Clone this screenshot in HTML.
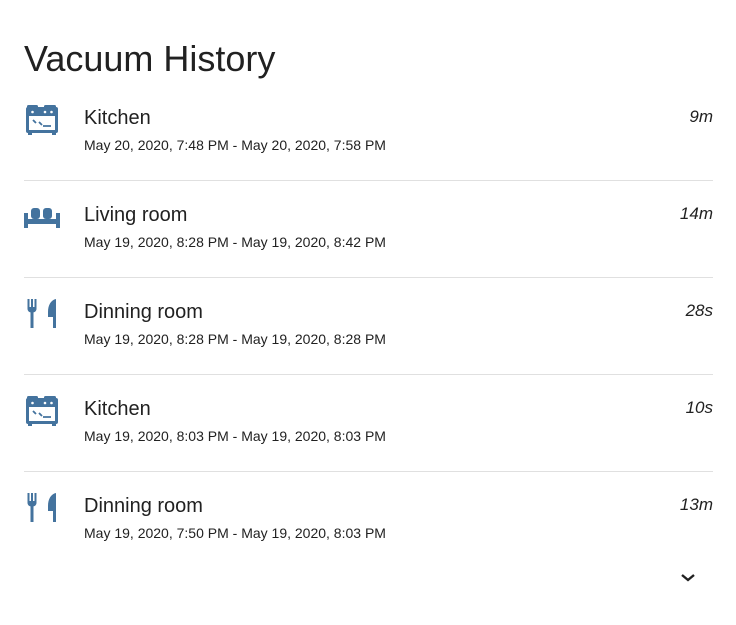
<!DOCTYPE html>
<html><head><style>
body{margin:0;background:#fff;font-family:"Liberation Sans",sans-serif;color:#212121;}
.card{position:absolute;left:0;top:0;width:736px;height:625px;background:#fff;}
h1{position:absolute;left:24px;top:36px;margin:0;font-weight:400;font-size:36px;line-height:46px;}
.row{position:absolute;left:0;width:736px;height:97px;}
.ic{position:absolute;left:24px;top:6px;width:36px;height:36px;}
.t{position:absolute;left:84px;top:8px;font-size:20px;line-height:24px;}
.d{position:absolute;left:84px;top:38px;font-size:14px;line-height:18px;}
.r{position:absolute;right:23px;top:8px;font-size:17px;font-style:italic;line-height:22px;}
.hr{position:absolute;left:24px;right:23px;top:82px;height:1px;background:#e0e0e0;}
</style></head><body><div class="card">
<h1>Vacuum History</h1>

<div class="row" style="top:98px">
<svg class="ic" viewBox="0 0 36 36"><g fill="#44739e"><rect x="2" y="3" width="32" height="26" rx="2"/><rect x="3" y="1" width="11" height="4" rx="1.5"/><rect x="20" y="1" width="12" height="4" rx="1.5"/><rect x="4" y="28" width="4" height="3"/><rect x="28" y="28" width="4" height="3"/></g><rect x="5" y="12" width="26" height="14" fill="#fff"/><g fill="#fff"><circle cx="8.5" cy="8" r="1.3"/><circle cx="21" cy="8" r="1.3"/><circle cx="27.5" cy="8" r="1.3"/></g><path d="M9 16l3 3M15 18l3 3M19 22h8" stroke="#44739e" stroke-width="1.8"/></svg>
<div class="t">Kitchen</div><div class="d">May 20, 2020, 7:48 PM - May 20, 2020, 7:58 PM</div><div class="r">9m</div><div class="hr"></div></div>

<div class="row" style="top:195px">
<svg class="ic" viewBox="0 0 36 36"><g fill="#44739e"><rect x="0" y="12" width="4" height="15"/><rect x="32" y="12" width="4" height="15"/><rect x="0" y="18" width="36" height="5"/><rect x="7" y="7" width="9" height="11" rx="3"/><rect x="19" y="7" width="9" height="11" rx="3"/></g></svg>
<div class="t">Living room</div><div class="d">May 19, 2020, 8:28 PM - May 19, 2020, 8:42 PM</div><div class="r">14m</div><div class="hr"></div></div>

<div class="row" style="top:292px">
<svg class="ic" viewBox="0 0 36 36"><g fill="#44739e"><path d="M3.5 1h2v8h1.5V1h2v8h1.5V1h2v10a3.5 3.5 0 0 1-3 3.4V30H6.5V14.4a3.5 3.5 0 0 1-3-3.4z"/><path d="M24 14c0-7 3-12 8-13v29h-3V19h-5z"/></g></svg>
<div class="t">Dinning room</div><div class="d">May 19, 2020, 8:28 PM - May 19, 2020, 8:28 PM</div><div class="r">28s</div><div class="hr"></div></div>

<div class="row" style="top:389px">
<svg class="ic" viewBox="0 0 36 36"><g fill="#44739e"><rect x="2" y="3" width="32" height="26" rx="2"/><rect x="3" y="1" width="11" height="4" rx="1.5"/><rect x="20" y="1" width="12" height="4" rx="1.5"/><rect x="4" y="28" width="4" height="3"/><rect x="28" y="28" width="4" height="3"/></g><rect x="5" y="12" width="26" height="14" fill="#fff"/><g fill="#fff"><circle cx="8.5" cy="8" r="1.3"/><circle cx="21" cy="8" r="1.3"/><circle cx="27.5" cy="8" r="1.3"/></g><path d="M9 16l3 3M15 18l3 3M19 22h8" stroke="#44739e" stroke-width="1.8"/></svg>
<div class="t">Kitchen</div><div class="d">May 19, 2020, 8:03 PM - May 19, 2020, 8:03 PM</div><div class="r">10s</div><div class="hr"></div></div>

<div class="row" style="top:486px">
<svg class="ic" viewBox="0 0 36 36"><g fill="#44739e"><path d="M3.5 1h2v8h1.5V1h2v8h1.5V1h2v10a3.5 3.5 0 0 1-3 3.4V30H6.5V14.4a3.5 3.5 0 0 1-3-3.4z"/><path d="M24 14c0-7 3-12 8-13v29h-3V19h-5z"/></g></svg>
<div class="t">Dinning room</div><div class="d">May 19, 2020, 7:50 PM - May 19, 2020, 8:03 PM</div><div class="r">13m</div></div>

<svg style="position:absolute;left:680px;top:573px" width="16" height="10" viewBox="0 0 16 10"><path d="M2 2l6 5 6-5" fill="none" stroke="#212121" stroke-width="2.4"/></svg>
</div></body></html>
